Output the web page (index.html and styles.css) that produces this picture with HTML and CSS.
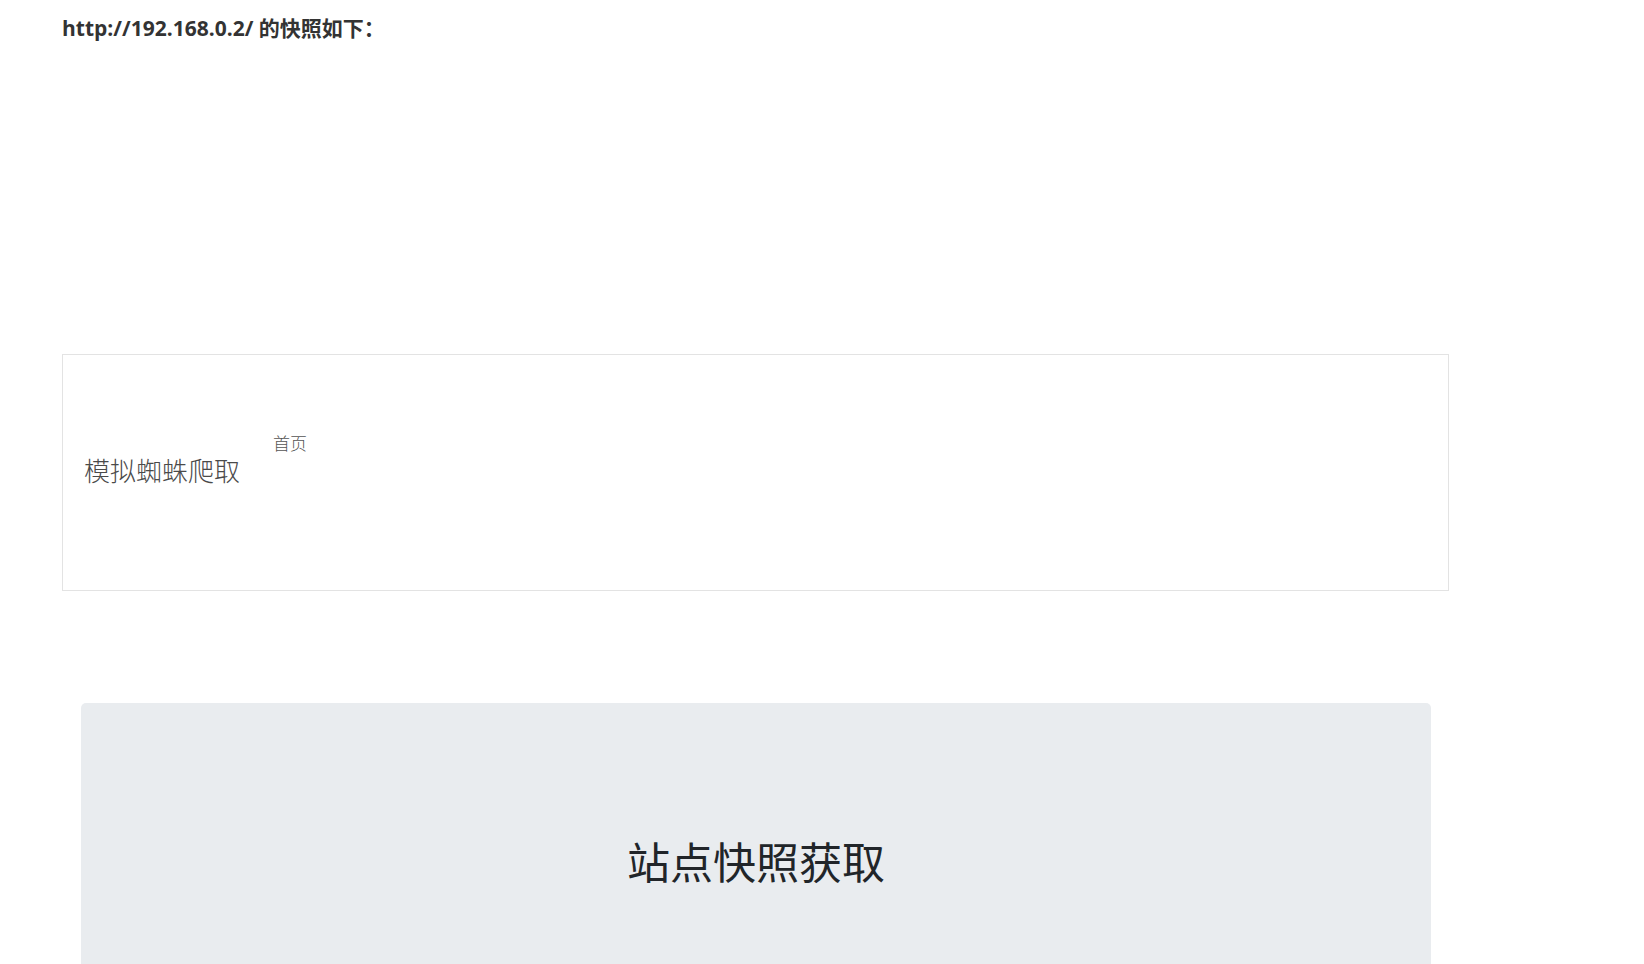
FILE: index.html
```html
<!DOCTYPE html>
<html lang="zh-CN">
<head>
    <meta charset="UTF-8">
    <meta name="viewport" content="width=device-width, initial-scale=1.0">
    <title>站点快照</title>
    <link rel="stylesheet" href="styles.css">
</head>
<body>

    <div class="page">
        <h3 class="snap-title">http://192.168.0.2/ 的快照如下：</h3>

        <div class="snap-frame">
            <div class="navbar">
                <span class="brand">模拟蜘蛛爬取</span>
                <a class="nav-link" href="#">首页</a>
            </div>
        </div>

        <div class="jumbotron">
            <h1>站点快照获取</h1>
        </div>
    </div>

</body>
</html>
```

FILE: styles.css
```css
body {
    margin: 0;
    padding: 0;
    background: #fff;
    overflow: hidden;
}

.page {
    padding: 13px 0 0 62px;
    width: 1387px;
}

.snap-title {
    margin: 0;
    font-family: 'Open Sans', 'Noto Sans CJK SC', sans-serif;
    font-size: 21px;
    font-weight: bold;
    line-height: 31px;
    color: #333;
}

.snap-frame {
    margin-top: 310px;
    height: 237px;
    box-sizing: border-box;
    border: 1px solid #e3e3e3;
    background: #fff;
}

.navbar {
    display: flex;
    align-items: flex-start;
    padding-left: 21px;
    font-family: 'Noto Sans CJK SC', serif;
    font-weight: 300;
}

.brand {
    margin-top: 95px;
    font-size: 26px;
    line-height: 39px;
    color: #4a4a4a;
}

.nav-link {
    margin: 75px 0 0 33px;
    font-size: 17px;
    line-height: 25px;
    color: #555;
    text-decoration: none;
}

.jumbotron {
    margin: 112px 18px 0 19px;
    padding: 132px 0 100px;
    background: #e9ecef;
    border-radius: 5px;
    text-align: center;
}

.jumbotron h1 {
    margin: 0;
    font-family: 'Noto Sans CJK SC', serif;
    font-size: 43px;
    font-weight: 400;
    line-height: 51px;
    color: #212529;
}
```
